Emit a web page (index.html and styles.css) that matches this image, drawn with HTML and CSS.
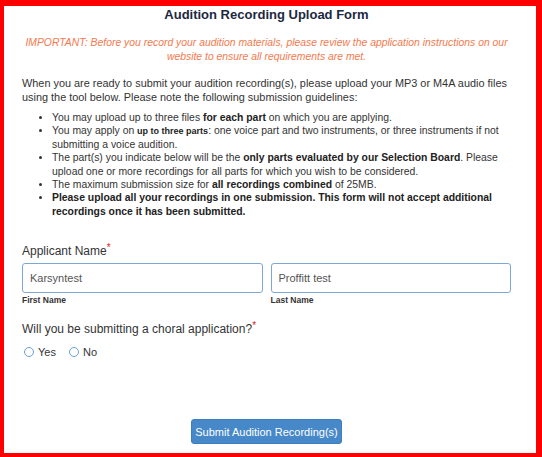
FILE: index.html
```html
<!DOCTYPE html>
<html>
<head>
<meta charset="utf-8">
<link rel="stylesheet" href="styles.css">
</head>
<body>
<div class="frame">
  <div class="form">
    <h1 class="title">Audition Recording Upload Form</h1>
    <p class="important">IMPORTANT: Before you record your audition materials, please review the application instructions on our website to ensure all requirements are met.</p>
    <p class="intro">When you are ready to submit your audition recording(s), please upload your MP3 or M4A audio files using the tool below. Please note the following submission guidelines:</p>
    <ul class="rules">
      <li>You may upload up to three files <b>for each part</b> on which you are applying.</li>
      <li>You may apply on <b class="small">up to three parts</b>: one voice part and two instruments, or three instruments if not submitting a voice audition.</li>
      <li>The part(s) you indicate below will be the <b>only parts evaluated by our Selection Board</b>. Please upload one or more recordings for all parts for which you wish to be considered.</li>
      <li>The maximum submission size for <b>all recordings combined</b> of 25MB.</li>
      <li><b>Please upload all your recordings in one submission. This form will not accept additional recordings once it has been submitted.</b></li>
    </ul>

    <div class="field name-field">
      <div class="label">Applicant Name<span class="req">*</span></div>
      <div class="name-row">
        <div class="name-col">
          <div class="input">Karsyntest</div>
          <div class="sub">First Name</div>
        </div>
        <div class="name-col">
          <div class="input">Proffitt test</div>
          <div class="sub">Last Name</div>
        </div>
      </div>
    </div>

    <div class="field choral">
      <div class="label">Will you be submitting a choral application?<span class="req">*</span></div>
      <div class="radios">
        <span class="radio"><span class="circle"></span>Yes</span>
        <span class="radio"><span class="circle"></span>No</span>
      </div>
    </div>

    <div class="actions">
      <button class="submit">Submit Audition Recording(s)</button>
    </div>
  </div>
</div>
</body>
</html>
```

FILE: styles.css
```css
html, body {
  margin: 0;
  padding: 0;
  background: #ffffff;
}
.frame {
  width: 542px;
  height: 457px;
  box-sizing: border-box;
  border-style: solid;
  border-color: #ff0000;
  border-width: 6px 6px 4px 4px;
  font-family: "Liberation Sans", Arial, sans-serif;
  color: #333333;
}
.form {
  padding: 1px 25px 0 18px;
  display: flex;
  flex-direction: column;
  height: 100%;
  box-sizing: border-box;
}
.title {
  margin: 0;
  font-size: 13px;
  line-height: 16px;
  text-align: center;
  color: #1c2840;
  font-weight: bold;
}
.important {
  margin: 13px 0 0;
  font-size: 10.4px;
  line-height: 14px;
  font-style: italic;
  color: #f4794e;
  text-align: center;
}
.intro {
  margin: 13px 0 0;
  font-size: 10.9px;
  line-height: 13.5px;
}
.rules {
  margin: 7px 0 0;
  padding-left: 30px;
  font-size: 10.4px;
  line-height: 13.4px;
}
.rules b { font-weight: bold; color: #222; }
.rules b.small { font-size: 9px; line-height: 10px; }
.name-field { margin-top: 25px; }
.label {
  font-size: 12px;
  line-height: 16px;
  color: #333;
}
.req { color: #e02020; font-size: 10px; line-height: 10px; vertical-align: top; }
.name-row {
  display: flex;
  gap: 8px;
  margin-top: 4px;
}
.name-col { flex: 1; }
.input {
  height: 30px;
  box-sizing: border-box;
  border: 1px solid #7ea7d8;
  border-radius: 3px;
  font-size: 11px;
  line-height: 28px;
  padding-left: 7px;
  color: #555;
}
.sub {
  font-size: 8.5px;
  font-weight: bold;
  line-height: 12px;
  margin-top: 1px;
  color: #333;
}
.choral { margin-top: 15px; }
.radios {
  display: flex;
  gap: 13px;
  margin-top: 8px;
  font-size: 11px;
  line-height: 14px;
  padding-left: 2px;
}
.radio { display: flex; align-items: center; gap: 4px; }
.circle {
  width: 10px;
  height: 10px;
  border: 1px solid #6c9fd3;
  border-radius: 50%;
  box-sizing: border-box;
  display: inline-block;
}
.actions {
  margin-top: auto;
  margin-bottom: 9px;
  display: flex;
  justify-content: center;
}
.submit {
  width: 151px;
  height: 25px;
  background: #4688c8;
  border: 1px solid #3f7fbf;
  border-radius: 3px;
  color: #ffffff;
  font-family: "Liberation Sans", Arial, sans-serif;
  font-size: 11px;
  padding: 0;
}
```
